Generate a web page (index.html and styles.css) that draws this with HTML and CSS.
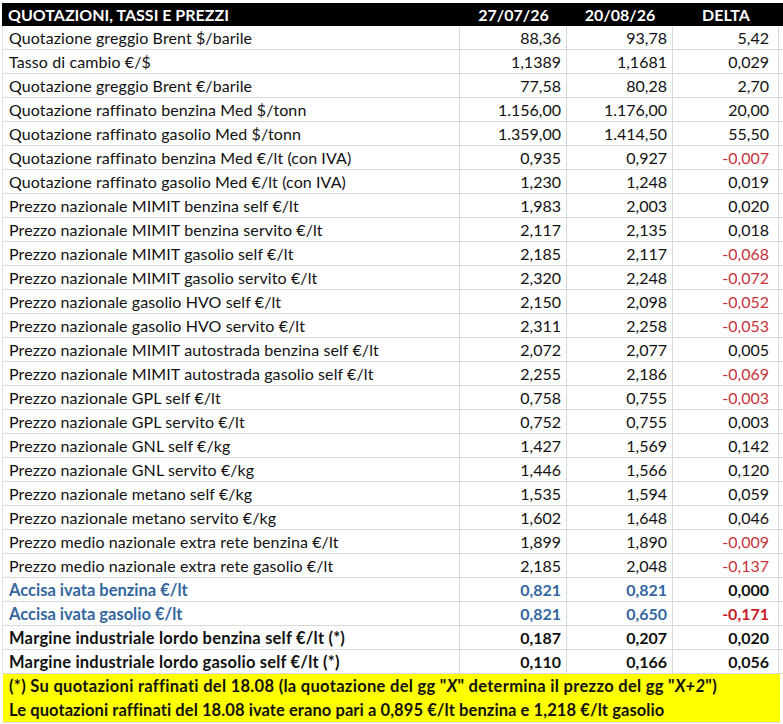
FILE: index.html
```html
<!DOCTYPE html>
<html lang="it">
<head>
<meta charset="utf-8">
<title>Quotazioni, tassi e prezzi</title>
<link rel="stylesheet" href="styles.css">
</head>
<body>
<div class="sheet">
  <div class="row head"><div class="c lbl">QUOTAZIONI, TASSI E PREZZI</div><div class="c ctr">27/07/26</div><div class="c ctr">20/08/26</div><div class="c ctr">DELTA</div></div>
  <div class="row"><div class="c lbl">Quotazione greggio Brent $/barile</div><div class="c num">88,36</div><div class="c num">93,78</div><div class="c num d">5,42</div></div>
  <div class="row"><div class="c lbl">Tasso di cambio €/$</div><div class="c num">1,1389</div><div class="c num">1,1681</div><div class="c num d">0,029</div></div>
  <div class="row"><div class="c lbl">Quotazione greggio Brent €/barile</div><div class="c num">77,58</div><div class="c num">80,28</div><div class="c num d">2,70</div></div>
  <div class="row"><div class="c lbl">Quotazione raffinato benzina Med $/tonn</div><div class="c num">1.156,00</div><div class="c num">1.176,00</div><div class="c num d">20,00</div></div>
  <div class="row"><div class="c lbl">Quotazione raffinato gasolio Med $/tonn</div><div class="c num">1.359,00</div><div class="c num">1.414,50</div><div class="c num d">55,50</div></div>
  <div class="row"><div class="c lbl">Quotazione raffinato benzina Med €/lt (con IVA)</div><div class="c num">0,935</div><div class="c num">0,927</div><div class="c num d neg">-0,007</div></div>
  <div class="row"><div class="c lbl">Quotazione raffinato gasolio Med €/lt (con IVA)</div><div class="c num">1,230</div><div class="c num">1,248</div><div class="c num d">0,019</div></div>
  <div class="row"><div class="c lbl">Prezzo nazionale MIMIT benzina self €/lt</div><div class="c num">1,983</div><div class="c num">2,003</div><div class="c num d">0,020</div></div>
  <div class="row"><div class="c lbl">Prezzo nazionale MIMIT benzina servito €/lt</div><div class="c num">2,117</div><div class="c num">2,135</div><div class="c num d">0,018</div></div>
  <div class="row"><div class="c lbl">Prezzo nazionale MIMIT gasolio self €/lt</div><div class="c num">2,185</div><div class="c num">2,117</div><div class="c num d neg">-0,068</div></div>
  <div class="row"><div class="c lbl">Prezzo nazionale MIMIT gasolio servito €/lt</div><div class="c num">2,320</div><div class="c num">2,248</div><div class="c num d neg">-0,072</div></div>
  <div class="row"><div class="c lbl">Prezzo nazionale gasolio HVO self €/lt</div><div class="c num">2,150</div><div class="c num">2,098</div><div class="c num d neg">-0,052</div></div>
  <div class="row"><div class="c lbl">Prezzo nazionale gasolio HVO servito €/lt</div><div class="c num">2,311</div><div class="c num">2,258</div><div class="c num d neg">-0,053</div></div>
  <div class="row"><div class="c lbl">Prezzo nazionale MIMIT autostrada benzina self €/lt</div><div class="c num">2,072</div><div class="c num">2,077</div><div class="c num d">0,005</div></div>
  <div class="row"><div class="c lbl">Prezzo nazionale MIMIT autostrada gasolio self €/lt</div><div class="c num">2,255</div><div class="c num">2,186</div><div class="c num d neg">-0,069</div></div>
  <div class="row"><div class="c lbl">Prezzo nazionale GPL self €/lt</div><div class="c num">0,758</div><div class="c num">0,755</div><div class="c num d neg">-0,003</div></div>
  <div class="row"><div class="c lbl">Prezzo nazionale GPL servito €/lt</div><div class="c num">0,752</div><div class="c num">0,755</div><div class="c num d">0,003</div></div>
  <div class="row"><div class="c lbl">Prezzo nazionale GNL self €/kg</div><div class="c num">1,427</div><div class="c num">1,569</div><div class="c num d">0,142</div></div>
  <div class="row"><div class="c lbl">Prezzo nazionale GNL servito €/kg</div><div class="c num">1,446</div><div class="c num">1,566</div><div class="c num d">0,120</div></div>
  <div class="row"><div class="c lbl">Prezzo nazionale metano self €/kg</div><div class="c num">1,535</div><div class="c num">1,594</div><div class="c num d">0,059</div></div>
  <div class="row"><div class="c lbl">Prezzo nazionale metano servito €/kg</div><div class="c num">1,602</div><div class="c num">1,648</div><div class="c num d">0,046</div></div>
  <div class="row"><div class="c lbl">Prezzo medio nazionale extra rete benzina €/lt</div><div class="c num">1,899</div><div class="c num">1,890</div><div class="c num d neg">-0,009</div></div>
  <div class="row"><div class="c lbl">Prezzo medio nazionale extra rete gasolio €/lt</div><div class="c num">2,185</div><div class="c num">2,048</div><div class="c num d neg">-0,137</div></div>
  <div class="row blue"><div class="c lbl">Accisa ivata benzina €/lt</div><div class="c num">0,821</div><div class="c num">0,821</div><div class="c num d strong">0,000</div></div>
  <div class="row blue"><div class="c lbl">Accisa ivata gasolio €/lt</div><div class="c num">0,821</div><div class="c num">0,650</div><div class="c num d strong neg2">-0,171</div></div>
  <div class="row bold"><div class="c lbl">Margine industriale lordo benzina self €/lt (*)</div><div class="c num">0,187</div><div class="c num">0,207</div><div class="c num d">0,020</div></div>
  <div class="row bold"><div class="c lbl">Margine industriale lordo gasolio self €/lt (*)</div><div class="c num">0,110</div><div class="c num">0,166</div><div class="c num d">0,056</div></div>
  <div class="note">
    <div class="note-line first">(*) Su quotazioni raffinati del 18.08 (la quotazione del gg "<i>X</i> " determina il prezzo del gg "<i>X+2</i> ")</div>
    <div class="note-line second">Le quotazioni raffinati del 18.08 ivate erano pari a 0,895 €/lt benzina e 1,218 €/lt gasolio</div>
  </div>
</div>
</body>
</html>
```

FILE: styles.css
```css
html, body {
  margin: 0;
  padding: 0;
  background: #ffffff;
}

body {
  font-family: Lato, "Open Sans", "Liberation Sans", sans-serif;
  font-size: 16px;
  color: #111111;
}

.sheet {
  width: 783px;
  padding-top: 3px;
  padding-left: 2px;
  box-sizing: border-box;
}

.row {
  display: grid;
  grid-template-columns: 458px 107px 106px 106px;
  height: 24px;
  border-bottom: 1px solid #d9d9d9;
  box-sizing: border-box;
}

.c {
  display: flex;
  align-items: center;
  border-right: 1px solid #d9d9d9;
  box-sizing: border-box;
  white-space: nowrap;
  overflow: hidden;
}

.lbl {
  padding-left: 6px;
  border-left: 1px solid #e2e2e2;
  letter-spacing: 0.1px;
}

.num {
  justify-content: flex-end;
  padding-right: 5px;
}

.num.d {
  padding-right: 9px;
}

.ctr {
  justify-content: center;
}

.head {
  height: 23px;
  background: #000000;
  color: #ffffff;
  font-weight: 700;
  border-bottom: 0;
}

.head .c {
  border: 0;
}

.head .lbl {
  padding-left: 6px;
  letter-spacing: 0;
}

.neg {
  color: #c8323a;
}

.blue {
  color: #3466a0;
  font-weight: 700;
}

.blue .lbl {
  font-size: 16.5px;
  letter-spacing: 0;
}

.strong {
  color: #111111;
  font-weight: 700;
}

.strong.neg2 {
  color: #c8202a;
}

.bold {
  font-weight: 700;
}

.bold .lbl {
  font-size: 16.5px;
  letter-spacing: 0.2px;
}

.note {
  width: 777px;
  margin-left: 1px;
  background: #ffff00;
  font-weight: 700;
  font-size: 16.5px;
  border-bottom: 1px solid #d9d9d9;
}

.note-line {
  height: 24px;
  display: flex;
  align-items: center;
  padding-left: 6px;
  white-space: nowrap;
}

.note-line.first {
  letter-spacing: 0.3px;
}

.note-line.second {
  letter-spacing: 0.08px;
}
```
